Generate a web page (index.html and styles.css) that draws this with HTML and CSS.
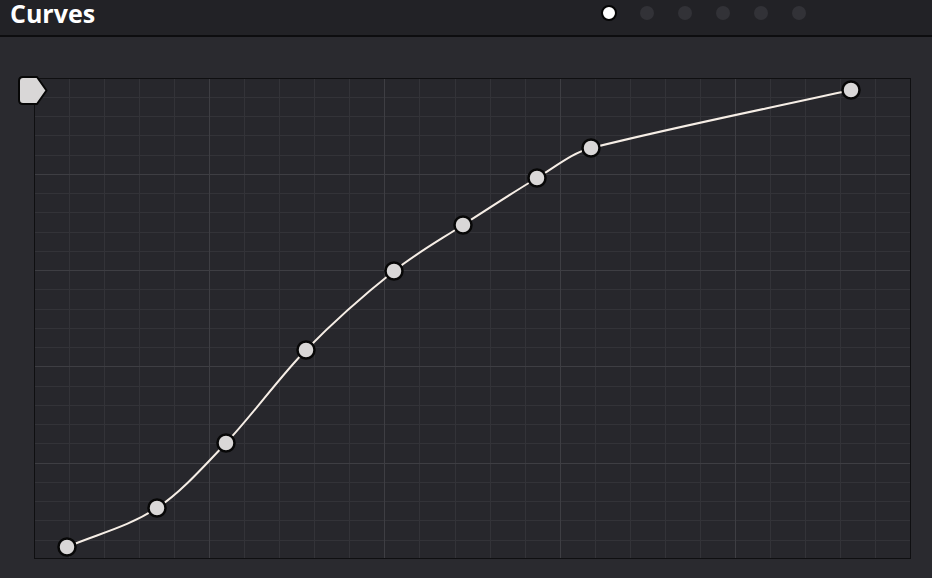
FILE: index.html
```html
<!DOCTYPE html>
<html>
<head>
<meta charset="utf-8">
<link rel="stylesheet" href="styles.css">
</head>
<body>
<header class="header">
  <h1 class="title">Curves</h1>
  <div class="dots">
    <span class="dot dot-active"></span>
    <span class="dot"></span>
    <span class="dot"></span>
    <span class="dot"></span>
    <span class="dot"></span>
    <span class="dot"></span>
  </div>
</header>
<main class="panel">
  <div class="plot">
    <svg class="plot-svg" width="877" height="481" viewBox="34 78 877 481">
      <g class="grid-minor" shape-rendering="crispEdges">
        <line x1="69.5" y1="78" x2="69.5" y2="559"/>
        <line x1="104.5" y1="78" x2="104.5" y2="559"/>
        <line x1="139.5" y1="78" x2="139.5" y2="559"/>
        <line x1="174.5" y1="78" x2="174.5" y2="559"/>
        <line x1="244.5" y1="78" x2="244.5" y2="559"/>
        <line x1="279.5" y1="78" x2="279.5" y2="559"/>
        <line x1="314.5" y1="78" x2="314.5" y2="559"/>
        <line x1="349.5" y1="78" x2="349.5" y2="559"/>
        <line x1="419.5" y1="78" x2="419.5" y2="559"/>
        <line x1="455.5" y1="78" x2="455.5" y2="559"/>
        <line x1="490.5" y1="78" x2="490.5" y2="559"/>
        <line x1="525.5" y1="78" x2="525.5" y2="559"/>
        <line x1="595.5" y1="78" x2="595.5" y2="559"/>
        <line x1="630.5" y1="78" x2="630.5" y2="559"/>
        <line x1="665.5" y1="78" x2="665.5" y2="559"/>
        <line x1="700.5" y1="78" x2="700.5" y2="559"/>
        <line x1="770.5" y1="78" x2="770.5" y2="559"/>
        <line x1="805.5" y1="78" x2="805.5" y2="559"/>
        <line x1="840.5" y1="78" x2="840.5" y2="559"/>
        <line x1="875.5" y1="78" x2="875.5" y2="559"/>
        <line x1="34" y1="97.5" x2="911" y2="97.5"/>
        <line x1="34" y1="116.5" x2="911" y2="116.5"/>
        <line x1="34" y1="135.5" x2="911" y2="135.5"/>
        <line x1="34" y1="155.5" x2="911" y2="155.5"/>
        <line x1="34" y1="193.5" x2="911" y2="193.5"/>
        <line x1="34" y1="212.5" x2="911" y2="212.5"/>
        <line x1="34" y1="232.5" x2="911" y2="232.5"/>
        <line x1="34" y1="251.5" x2="911" y2="251.5"/>
        <line x1="34" y1="289.5" x2="911" y2="289.5"/>
        <line x1="34" y1="309.5" x2="911" y2="309.5"/>
        <line x1="34" y1="328.5" x2="911" y2="328.5"/>
        <line x1="34" y1="347.5" x2="911" y2="347.5"/>
        <line x1="34" y1="386.5" x2="911" y2="386.5"/>
        <line x1="34" y1="405.5" x2="911" y2="405.5"/>
        <line x1="34" y1="424.5" x2="911" y2="424.5"/>
        <line x1="34" y1="443.5" x2="911" y2="443.5"/>
        <line x1="34" y1="482.5" x2="911" y2="482.5"/>
        <line x1="34" y1="501.5" x2="911" y2="501.5"/>
        <line x1="34" y1="520.5" x2="911" y2="520.5"/>
        <line x1="34" y1="540.5" x2="911" y2="540.5"/>
      </g>
      <g class="grid-major" shape-rendering="crispEdges">
        <line x1="209.5" y1="78" x2="209.5" y2="559"/>
        <line x1="384.5" y1="78" x2="384.5" y2="559"/>
        <line x1="560.5" y1="78" x2="560.5" y2="559"/>
        <line x1="735.5" y1="78" x2="735.5" y2="559"/>
        <line x1="34" y1="174.5" x2="911" y2="174.5"/>
        <line x1="34" y1="270.5" x2="911" y2="270.5"/>
        <line x1="34" y1="366.5" x2="911" y2="366.5"/>
        <line x1="34" y1="463.5" x2="911" y2="463.5"/>
      </g>
      <rect class="frame" x="34.5" y="78.5" width="876" height="480" shape-rendering="crispEdges"/>
      <path class="curve" d="M67 547 C97 534 127 527.6 157 508 C180 493 203 467.4 226 443 C252.7 414.7 279.3 377.3 306 350 C335.3 320 364.7 294.3 394 271 C417 252.7 440 240 463 225 C487.7 209 512.3 192.9 537 178 C555 167.2 573 152.5 591 148 C677.7 126.3 764.3 109.3 851 90"/>
      <g class="points">
        <circle cx="67" cy="547" r="8.5"/>
        <circle cx="157" cy="508" r="8.5"/>
        <circle cx="226" cy="443" r="8.5"/>
        <circle cx="306" cy="350" r="8.5"/>
        <circle cx="394" cy="271" r="8.5"/>
        <circle cx="463" cy="225" r="8.5"/>
        <circle cx="537" cy="178" r="8.5"/>
        <circle cx="591" cy="148" r="8.5"/>
        <circle cx="851" cy="90" r="8.5"/>
      </g>
      <path class="marker" d="M23 77 H37 L46.5 90.5 L37 104 H23 Q19 104 19 100 V81 Q19 77 23 77 Z"/>
    </svg>
  </div>
</main>
</body>
</html>
```

FILE: styles.css
```css
html, body {
  margin: 0;
  padding: 0;
}

body {
  width: 932px;
  height: 578px;
  background: #2a2a2f;
  font-family: "Open Sans", "DejaVu Sans", sans-serif;
  overflow: hidden;
}

.header {
  display: flex;
  align-items: flex-start;
  height: 35px;
  background: #222226;
  border-bottom: 2px solid #0d0d0f;
  padding: 0 126px 0 10px;
}

.title {
  margin: 0;
  font-size: 25px;
  line-height: 26px;
  font-weight: 700;
  color: #ffffff;
}

.dots {
  display: flex;
  align-items: center;
  gap: 24px;
  margin-left: auto;
  margin-top: 6px;
}

.dot {
  width: 14px;
  height: 14px;
  border-radius: 50%;
  background: #323237;
  box-sizing: border-box;
}

.dot-active {
  width: 16px;
  height: 16px;
  margin: -1px;
  background: #ffffff;
  border: 2px solid #050505;
}

.panel {
  padding: 41px 0 0 34px;
}

.plot {
  width: 877px;
  height: 481px;
  background: #27272c;
}

.plot-svg {
  display: block;
  overflow: visible;
}

.grid-minor line {
  stroke: #333338;
  stroke-width: 1;
}

.grid-major line {
  stroke: #3e3e43;
  stroke-width: 1;
}

.frame {
  fill: none;
  stroke: #0f0f11;
  stroke-width: 1;
}

.curve {
  fill: none;
  stroke: #f6eee6;
  stroke-width: 2;
}

.points circle {
  fill: #d9d7d7;
  stroke: #070707;
  stroke-width: 2.5;
}

.marker {
  fill: #d9d7d7;
  stroke: #070707;
  stroke-width: 2;
  stroke-linejoin: round;
}
```
